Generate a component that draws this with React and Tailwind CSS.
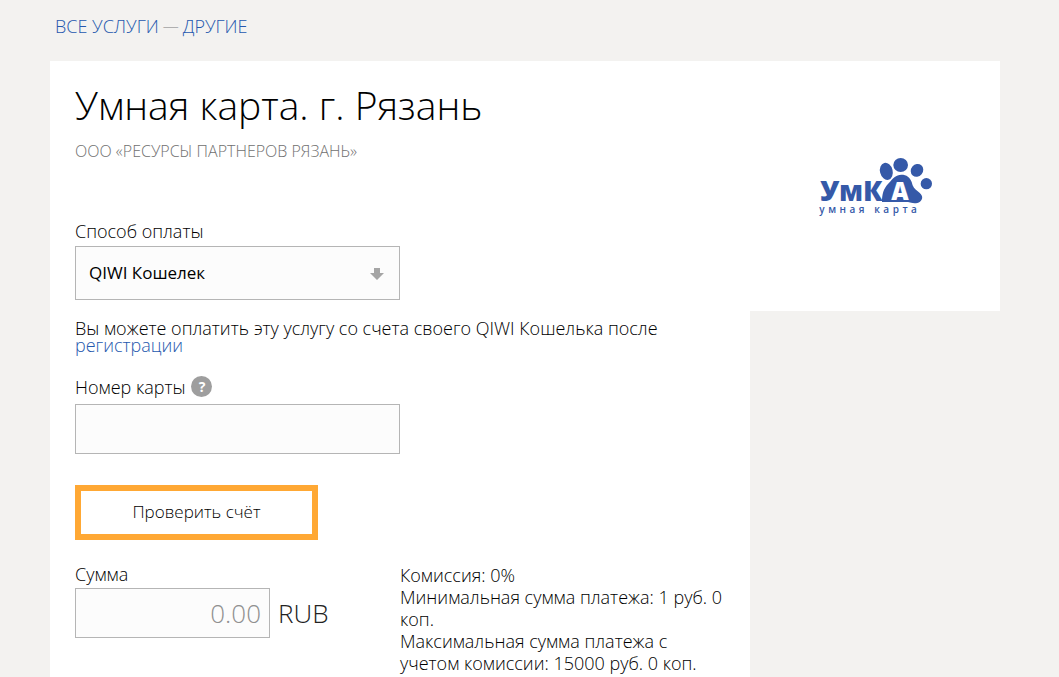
import React from 'react';

const Logo = () => (
  <svg viewBox="0 0 390 240" className="w-[130px] h-[80px]" role="img" aria-label="УмКа">
    <g fill="#3559a8">
      <ellipse cx="229" cy="76" rx="19" ry="26" transform="rotate(-14 229 76)" />
      <ellipse cx="272" cy="57" rx="22" ry="21" />
      <ellipse cx="321" cy="73" rx="18" ry="20" transform="rotate(40 321 73)" />
      <circle cx="349" cy="113" r="17" />
      <path d="M216 168C216 146 220 128 236 112C248 98 258 86 274 86C290 86 300 94 305 108C308 122 314 130 325 137C338 146 341 158 330 167C320 174 306 172 294 168Z" />
      <text x="30" y="165" fontSize="84" fontWeight="800" fontFamily="Open Sans, sans-serif">УмК</text>
      <text x="28" y="201" fontSize="30" fontWeight="600" fontFamily="Open Sans, sans-serif" className="tracking-[0.35em]">
        умная карта
      </text>
    </g>
    <text x="244" y="161" fontSize="72" fontWeight="800" fill="#fff" fontFamily="Open Sans, sans-serif">А</text>
  </svg>
);

const ArrowDown = () => (
  <svg viewBox="0 0 14 12" className="w-3.5 h-3 fill-[#a5a5a5]" aria-hidden="true">
    <path d="M4 0h6v5H14L7 12 0 5h4z" />
  </svg>
);

const App = () => {
  return (
    <div className="min-h-screen bg-[#f3f2f0] px-[50px] font-['Open_Sans',sans-serif] font-light text-lg text-black">
      <nav className="flex gap-1 px-[5px] pt-3 pb-[21px] leading-7 text-[#a0a0a0]">
        <a href="#all" className="text-[#2558ae]">ВСЕ УСЛУГИ</a>
        <span className="text-base leading-7">—</span>
        <a href="#other" className="text-[#2558ae]">ДРУГИЕ</a>
      </nav>

      <div className="flex items-start max-w-[950px]">
        <main className="flex-1 min-h-[616px] bg-white px-[25px] pt-5">
          <h1 className="text-[39px] leading-12">Умная карта. г. Рязань</h1>
          <p className="mt-3 text-base leading-5 text-[#707070]">ООО «РЕСУРСЫ ПАРТНЕРОВ РЯЗАНЬ»</p>

          <form className="mt-[60px]">
            <label htmlFor="method" className="block leading-5">Способ оплаты</label>
            <div className="relative mt-[5px] max-w-[325px]">
              <select
                id="method"
                className="w-full h-[54px] appearance-none border border-[#b5b5b5] bg-[#fcfcfc] px-[13px] text-[17px] font-medium"
              >
                <option>QIWI Кошелек</option>
              </select>
              <span className="absolute right-4 top-[22px] pointer-events-none">
                <ArrowDown />
              </span>
            </div>

            <p className="mt-5 leading-[17px]">
              Вы можете оплатить эту услугу со счета своего QIWI Кошелька после{' '}
              <a href="#register" className="text-[#2558ae]">регистрации</a>
            </p>

            <div className="mt-[22px] flex items-center gap-1.5">
              <label htmlFor="card" className="leading-5">Номер карты</label>
              <button
                type="button"
                aria-label="Помощь"
                className="size-[21px] rounded-full bg-[#9e9e9e] text-sm leading-5 font-bold text-white"
              >
                ?
              </button>
            </div>
            <input
              id="card"
              type="text"
              className="block mt-[7px] w-full max-w-[325px] h-[50px] border border-[#b5b5b5] bg-[#fcfcfc] px-3"
            />

            <button type="button" className="block mt-[31px] h-[55px] w-[243px] border-6 border-[#ffa834] bg-white text-[17px]">
              Проверить счёт
            </button>

            <div className="mt-6 flex">
              <div className="w-[325px]">
                <label htmlFor="sum" className="block leading-5">Сумма</label>
                <div className="mt-1 flex items-center gap-2 text-[26px]">
                  <input
                    id="sum"
                    type="text"
                    placeholder="0.00"
                    className="w-[195px] h-[50px] border border-[#b5b5b5] bg-[#fcfcfc] px-2 text-right placeholder:text-[#909090]"
                  />
                  <span className="text-[#222]">RUB</span>
                </div>
              </div>
              <div className="flex-1 leading-[22px]">
                <p>Комиссия: 0%</p>
                <p>Минимальная сумма платежа: 1 руб. 0 коп.</p>
                <p>Максимальная сумма платежа с учетом комиссии: 15000 руб. 0 коп.</p>
              </div>
            </div>
          </form>
        </main>

        <aside className="flex h-[250px] w-[250px] items-center justify-center bg-white">
          <Logo />
        </aside>
      </div>
    </div>
  );
};

export default App;
